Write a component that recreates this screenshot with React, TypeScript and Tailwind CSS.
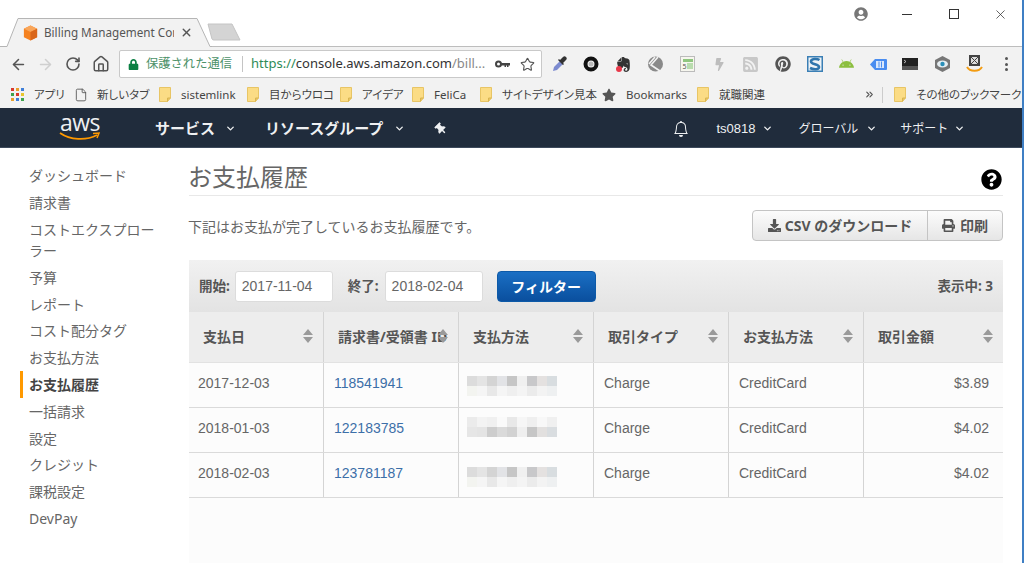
import { ArrowLeft, ArrowRight, ChevronDown, ChevronsRight, File, Home, RotateCw, Star, X } from "lucide-react";
import { FaAndroid, FaBolt, FaDownload, FaLock, FaPinterest, FaPrint, FaQuestionCircle, FaRssSquare, FaStar, FaThumbtack, FaUserCircle } from "react-icons/fa";
import { SiEvernote } from "react-icons/si";
import { BsBell } from "react-icons/bs";

const UI = "font-['Noto_Sans','Noto_Sans_CJK_JP',sans-serif]";
const BODY = "font-['Liberation_Sans','Noto_Sans_CJK_JP',sans-serif]";

function Folder() {
  return (
    <svg width="12" height="15" viewBox="0 0 12 15" className="shrink-0">
      <path d="M.5.5h11v10.5l-3 3.5H.5z" fill="#fbdc85" stroke="#e8c565" />
      <path d="M11.5 11h-3v3.5" fill="#e8c565" stroke="#d9b550" />
    </svg>
  );
}

function AppsIcon() {
  const colors = ["bg-[#d9392c]", "bg-[#e8a02c]", "bg-[#3e7fd9]", "bg-[#3fa34d]", "bg-[#d9392c]", "bg-[#e8c62c]", "bg-[#e8a02c]", "bg-[#3e7fd9]", "bg-[#3fa34d]"];
  return (
    <div className="grid grid-cols-3 gap-[1.5px] w-[13px] h-[13px] shrink-0">
      {colors.map((c, i) => (
        <span key={i} className={c} />
      ))}
    </div>
  );
}

function Bookmark({ icon, label, width }: { icon: React.ReactNode; label: string; width: string }) {
  return (
    <div className={`flex items-center gap-[10px] shrink-0 ${width}`}>
      {icon}
      <span className="whitespace-nowrap">{label}</span>
    </div>
  );
}

function TabStrip() {
  return (
    <div className="relative h-[47px] bg-white border-b border-[#bdbdbd] flex items-end">
      <div className="relative w-[212px] h-[29px] -mb-px flex items-center pl-[22px]">
        <svg width="212" height="29" viewBox="0 0 212 29" className="absolute inset-0">
          <path d="M0 29V28.500h7L18 .5h179l13 28h2v.5z" fill="#f2f2f2" />
          <path d="M0 28.500h7L18 .5h179l13 28h2" fill="none" stroke="#b5b5b5" />
        </svg>
        <svg width="17" height="18" viewBox="0 0 18 18" className="relative shrink-0">
          <path d="M9 1l7 3.500v9L9 17l-7-3.500v-9z" fill="#f58220" />
          <path d="M9 1l7 3.500L9 8 2 4.500z" fill="#f9a65a" />
          <path d="M9 8l7-3.500v9L9 17z" fill="#d9661a" />
        </svg>
        <span className={`relative ml-[5px] w-[130px] overflow-hidden whitespace-nowrap text-[11.700px] text-[#555] ${UI}`}>Billing Management Con</span>
        <X size={13} strokeWidth={2.5} className="relative ml-[6px] text-[#555]" />
      </div>
      <svg width="36" height="19" viewBox="0 0 36 19" className="mb-[4px] -ml-[5px]">
        <path d="M1 1h24l8 16H7a2 2 0 0 1-2-1z" fill="#d4d4d4" stroke="#c4c4c4" />
      </svg>
      <div className="absolute right-[2px] top-0 h-[28px] flex items-center text-[#555]">
        <FaUserCircle size={14} className="mr-[34px] text-[#777]" />
        <span className="w-[10px] h-px bg-[#333] mr-[37px]" />
        <span className="w-[10px] h-[10px] border border-[#333] mr-[34px]" />
        <X size={15} strokeWidth={1.2} className="mr-[12px] text-[#333]" />
      </div>
    </div>
  );
}

function ExtSlot({ children }: { children: React.ReactNode }) {
  return <div className="w-[31.900px] shrink-0 flex items-center justify-center">{children}</div>;
}

function Toolbar() {
  return (
    <div className={`h-[34px] bg-[#f2f2f2] flex items-center pl-[10px] ${UI}`}>
      <ArrowLeft size={17} strokeWidth={2.2} className="text-[#555]" />
      <ArrowRight size={17} strokeWidth={2.2} className="ml-[10px] text-[#cfcfcf]" />
      <RotateCw size={16} strokeWidth={2.4} className="ml-[11px] text-[#555]" />
      <Home size={18} strokeWidth={2} className="ml-[11px] text-[#555]" />
      <div className="ml-[9px] w-[423px] h-[28px] bg-white border border-[#c9c9c9] rounded-[2px] flex items-center pl-[8px] pr-[6px]">
        <FaLock size={11} className="shrink-0 text-[#0b8043]" />
        <span className="ml-[7px] whitespace-nowrap text-[#4c9168] text-[12.300px]">保護された通信</span>
        <span className="ml-[10px] w-px h-[16px] bg-[#c4c4c4] shrink-0" />
        <span className="ml-[8px] whitespace-nowrap text-[13px]">
          <span className="text-[#2e8b57]">https://</span>
          <span className="text-[#333]">console.aws.amazon.com</span>
          <span className="text-[#888]">/bill...</span>
        </span>
        <svg width="15" height="8" viewBox="0 0 15 8" className="ml-auto shrink-0">
          <circle cx="3.500" cy="4" r="2.500" fill="none" stroke="#444" strokeWidth="2" />
          <path d="M6 3h9v2.500h-1.500V7H12V5.500h-1V7H9.500V5.500H6z" fill="#444" />
        </svg>
        <Star size={15} strokeWidth={1.8} className="ml-[10px] shrink-0 text-[#555]" />
      </div>
      <div className="ml-[2px] flex items-center">
        <ExtSlot>
          <svg width="16" height="16" viewBox="0 0 16 16">
            <path d="M1 15l1-4 6-6 3 3-6 6z" fill="#7d8bd0" />
            <path d="M8 4l3-3c1-1 2-1 3 0s1 2 0 3l-3 3 1 1-1 1-5-5 1-1z" fill="#333" />
          </svg>
        </ExtSlot>
        <ExtSlot>
          <svg width="16" height="16" viewBox="0 0 16 16">
            <circle cx="8" cy="8" r="5.500" fill="none" stroke="#111" strokeWidth="4" />
            <circle cx="8" cy="8" r="2.500" fill="#bbb" />
          </svg>
        </ExtSlot>
        <ExtSlot>
          <div className="relative">
            <SiEvernote size={15} className="text-[#333]" />
            <span className="absolute left-0 bottom-0 w-[6px] h-[6px] rounded-full bg-[#e8394a]" />
          </div>
        </ExtSlot>
        <ExtSlot>
          <svg width="17" height="16" viewBox="0 0 17 16">
            <circle cx="8.500" cy="8" r="7.500" fill="#8a8a8a" />
            <path d="M11 1L4 9l9 6M8 1L2 8" fill="none" stroke="#f2f2f2" strokeWidth="1.600" />
          </svg>
        </ExtSlot>
        <ExtSlot>
          <svg width="15" height="16" viewBox="0 0 15 16">
            <rect x=".5" y=".5" width="14" height="15" fill="#f6f6ee" stroke="#bbb" />
            <rect x="3" y="3" width="10" height="3" fill="#8fc57f" />
            <rect x="7" y="7" width="6" height="6" fill="#b9dcae" />
            <text x="2.500" y="13" fontSize="7" fill="#555">5</text>
          </svg>
        </ExtSlot>
        <ExtSlot>
          <FaBolt size={13} className="text-[#bdbdbd]" />
        </ExtSlot>
        <ExtSlot>
          <FaRssSquare size={17} className="text-[#c8c8c8]" />
        </ExtSlot>
        <ExtSlot>
          <FaPinterest size={16} className="text-[#555]" />
        </ExtSlot>
        <ExtSlot>
          <svg width="16" height="16" viewBox="0 0 16 16">
            <rect width="16" height="16" fill="#3b7fb5" />
            <rect x="1.500" y="1.500" width="13" height="13" fill="#eef3f7" />
            <path d="M12.500 4C10 2.500 4 2.500 4 5.500S12 8 12 11s-6 2.500-9 1" fill="none" stroke="#2f75ad" strokeWidth="2.600" />
          </svg>
        </ExtSlot>
        <ExtSlot>
          <FaAndroid size={15} className="text-[#8cbf3f]" />
        </ExtSlot>
        <ExtSlot>
          <svg width="17" height="13" viewBox="0 0 17 13">
            <path d="M5 1h11a1 1 0 0 1 1 1v9a1 1 0 0 1-1 1H5L0 6.500z" fill="#4a8df0" />
            <rect x="6" y="3" width="8" height="7" fill="#dbe8fb" />
            <path d="M9 3.500v6M11.500 3.500v6" stroke="#4a8df0" />
          </svg>
        </ExtSlot>
        <ExtSlot>
          <svg width="16" height="12" viewBox="0 0 16 12">
            <rect width="16" height="12" fill="#222" />
            <rect y="8" width="16" height="4" fill="#555" />
            <path d="M2 2l2 1.500L2 5" fill="none" stroke="#ddd" strokeWidth=".8" />
          </svg>
        </ExtSlot>
        <ExtSlot>
          <svg width="17" height="16" viewBox="0 0 17 16">
            <path d="M8.500 0l7.500 4v8l-7.500 4L1 12V4z" fill="#777" />
            <ellipse cx="8.500" cy="8" rx="5.500" ry="3.500" fill="#e6eef2" />
            <circle cx="8.500" cy="8" r="2.200" fill="#2a8fb8" />
          </svg>
        </ExtSlot>
        <ExtSlot>
          <svg width="17" height="18" viewBox="0 0 17 18">
            <rect x="3" y="0" width="11" height="11" fill="#444" />
            <rect x="5" y="2" width="7" height="7" fill="#ddd" />
            <path d="M5 2l7 7M12 2L5 9" stroke="#444" />
            <path d="M1 12c3 5 12 5 15 0" fill="none" stroke="#f39c12" strokeWidth="2" />
          </svg>
        </ExtSlot>
        <ExtSlot>
          <div className="flex flex-col gap-[2.500px]">
            <span className="w-[3px] h-[3px] rounded-full bg-[#555]" />
            <span className="w-[3px] h-[3px] rounded-full bg-[#555]" />
            <span className="w-[3px] h-[3px] rounded-full bg-[#555]" />
          </div>
        </ExtSlot>
      </div>
    </div>
  );
}

function BookmarksBar() {
  return (
    <div className={`h-[27px] bg-[#f2f2f2] flex items-center pl-[11px] text-[11.500px] text-[#444] [font-feature-settings:'palt'] ${UI}`}>
      <Bookmark icon={<AppsIcon />} label="アプリ" width="w-[64px]" />
      <Bookmark icon={<File size={14} strokeWidth={1.5} className="text-[#555] -mx-[1px]" />} label="新しいタブ" width="w-[84px]" />
      <Bookmark icon={<Folder />} label="sistemlink" width="w-[88px]" />
      <Bookmark icon={<Folder />} label="目からウロコ" width="w-[93px]" />
      <Bookmark icon={<Folder />} label="アイデア" width="w-[72px]" />
      <Bookmark icon={<Folder />} label="FeliCa" width="w-[68px]" />
      <Bookmark icon={<Folder />} label="サイトデザイン見本" width="w-[122px]" />
      <Bookmark icon={<FaStar size={14} className="text-[#555]" />} label="Bookmarks" width="w-[95px]" />
      <Bookmark icon={<Folder />} label="就職関連" width="w-[167px]" />
      <ChevronsRight size={11} strokeWidth={2.5} className="text-[#555] shrink-0" />
      <span className="ml-[7px] w-px h-[16px] bg-[#ccc] shrink-0" />
      <div className="ml-[11px]">
        <Bookmark icon={<Folder />} label="その他のブックマーク" width="w-[115px]" />
      </div>
    </div>
  );
}

function NavMenu({ label, className }: { label: string; className: string }) {
  return (
    <div className={`flex items-center whitespace-nowrap ${className}`}>
      <span>{label}</span>
    </div>
  );
}

function Caret({ className }: { className: string }) {
  return <ChevronDown size={11} strokeWidth={3} className={`shrink-0 ${className}`} />;
}

function AwsNav() {
  return (
    <div className={`h-[40px] pt-[2px] bg-[#202c3c] border-b border-[#3d4a5c] flex items-center text-[#eef0f2] ${UI}`}>
      <div className="ml-[59px] w-[42px] h-[34px] relative flex flex-col items-center shrink-0">
        <span className="text-[23px] leading-[24px] -mt-[2px] tracking-[-0.5px] font-['Open_Sans',sans-serif]">aws</span>
        <svg width="42" height="9" viewBox="0 0 42 9" className="absolute left-0 bottom-[5px]">
          <path d="M1 1c10 7 26 8 37 2" fill="none" stroke="#f90" strokeWidth="1.800" />
          <path d="M34 1.500l6-.5-2 5" fill="none" stroke="#f90" strokeWidth="1.500" />
        </svg>
      </div>
      <NavMenu label="サービス" className="ml-[54px] text-[15px] font-bold" />
      <Caret className="ml-[10px]" />
      <NavMenu label="リソースグループ" className="ml-[29px] text-[15px] font-bold" />
      <Caret className="ml-[11px]" />
      <FaThumbtack size={12} className="ml-[30px] -rotate-45 shrink-0" />
      <BsBell size={16} className="ml-[226px] shrink-0" />
      <NavMenu label="ts0818" className={`ml-[27px] text-[13px] ${BODY}`} />
      <Caret className="ml-[7px]" />
      <NavMenu label="グローバル" className="ml-[25px] text-[12px]" />
      <Caret className="ml-[8px]" />
      <NavMenu label="サポート" className="ml-[23px] text-[12px]" />
      <Caret className="ml-[6px]" />
    </div>
  );
}

function Sidebar() {
  const items = ["ダッシュボード", "請求書", "コストエクスプローラー", "予算", "レポート", "コスト配分タグ", "お支払方法", "お支払履歴", "一括請求", "設定", "クレジット", "課税設定", "DevPay"];
  return (
    <div className="w-[189px] shrink-0 pt-[14.600px] pl-[20px]">
      {items.map((item) => (
        <div
          key={item}
          className={
            item === "お支払履歴"
              ? "w-[139px] py-[2.900px] pl-[6px] border-l-[3px] border-[#f90] text-[14px] leading-[21px] font-bold text-[#444]"
              : "w-[139px] py-[2.900px] pl-[9px] text-[14px] leading-[21px] text-[#666]"
          }
        >
          {item}
        </div>
      ))}
    </div>
  );
}

const rowsTiles = [
  ["bg-[#dcdcdc]", "bg-[#e4e4e4]", "bg-[#d4d4d4]", "bg-[#e2e3e6]", "bg-[#c6c6c6]", "bg-[#f0f0f0]", "bg-[#c8c8ca]", "bg-[#e4e1e0]", "bg-[#d8dde0]"],
  ["bg-[#f3f4f0]", "bg-[#f5f5f5]", "bg-[#e8e8e8]", "bg-[#f5f5f5]", "bg-[#efefef]", "bg-[#f4f4f4]", "bg-[#ebebeb]", "bg-[#f3f3f3]", "bg-[#eef0f1]"],
];

const rowsTilesFlipped = [
  ["bg-[#ebebeb]", "bg-[#f3f3f3]", "bg-[#f0f0f0]", "bg-[#fafafa]", "bg-[#e8e8e8]", "bg-[#f6f6f6]", "bg-[#efefef]", "bg-[#f8f8f8]", "bg-[#f0f0f0]"],
  ["bg-[#e6e6e6]", "bg-[#e4e4e4]", "bg-[#cdcdcd]", "bg-[#dadada]", "bg-[#d2d2d2]", "bg-[#efefef]", "bg-[#c6c6c6]", "bg-[#e2e0df]", "bg-[#d9dde0]"],
];

function Mosaic({ rows, offset }: { rows: string[][]; offset: string }) {
  return (
    <div className={`flex flex-col ${offset}`}>
      {rows.map((row, i) => (
        <div key={i} className="flex">
          {row.map((c, j) => (
            <span key={j} className={`w-[10px] h-[10px] ${c}`} />
          ))}
        </div>
      ))}
    </div>
  );
}

function SortIcon() {
  return (
    <svg width="10" height="14" viewBox="0 0 10 14" className="ml-auto shrink-0 text-[#9a9a9a]">
      <path d="M5 0l5 6H0zM0 8h10l-5 6z" fill="currentColor" />
    </svg>
  );
}

const headers = ["支払日", "請求書/受領書 ID", "支払方法", "取引タイプ", "お支払方法", "取引金額"];

const payments = [
  { date: "2017-12-03", id: "118541941", tiles: rowsTiles, offset: "mt-[5px]", type: "Charge", method: "CreditCard", amount: "$3.89" },
  { date: "2018-01-03", id: "122183785", tiles: rowsTilesFlipped, offset: "-mt-[4px]", type: "Charge", method: "CreditCard", amount: "$4.02" },
  { date: "2018-02-03", id: "123781187", tiles: rowsTiles, offset: "mt-[6px]", type: "Charge", method: "CreditCard", amount: "$4.02" },
];

const gridCols = "grid grid-cols-[135px_135px_135px_135px_135px_139px]";

function PaymentsTable() {
  return (
    <div className="flex-1 bg-[#fcfcfc]">
      <div className={`${gridCols} h-[51px] bg-[#ededed] border-b border-[#e2e2e2]`}>
        {headers.map((h, i) => (
          <div key={h} className={`flex items-center pb-[2px] pl-[14px] pr-[10px] ${i < 5 ? "border-r border-[#d4d4d4]" : ""}`}>
            <span className="min-w-0 whitespace-nowrap text-[14px] font-bold text-[#555]">{h}</span>
            <SortIcon />
          </div>
        ))}
      </div>
      {payments.map((p) => (
        <div key={p.id} className={`${gridCols} h-[45px] border-b border-[#dadada] text-[14px] text-[#666] ${BODY}`}>
          <div className="flex items-center pb-[3px] pl-[9px] border-r border-[#d4d4d4]">{p.date}</div>
          <div className="flex items-center pb-[3px] pl-[10px] border-r border-[#d4d4d4] text-[#3c6fa8]">{p.id}</div>
          <div className="flex items-center pb-[3px] pl-[8px] border-r border-[#d4d4d4]">
            <Mosaic rows={p.tiles} offset={p.offset} />
          </div>
          <div className="flex items-center pb-[3px] pl-[10px] border-r border-[#d4d4d4]">{p.type}</div>
          <div className="flex items-center pb-[3px] pl-[10px] border-r border-[#d4d4d4]">{p.method}</div>
          <div className="flex items-center pb-[3px] justify-end pr-[14px]">{p.amount}</div>
        </div>
      ))}
    </div>
  );
}

function DateField({ value }: { value: string }) {
  return (
    <div className={`w-[98px] h-[31px] bg-white border border-[#dcdcdc] rounded-[3px] flex items-center pl-[6px] text-[14px] font-normal text-[#666] ${BODY}`}>{value}</div>
  );
}

function Content() {
  return (
    <div className="flex-1 min-w-0 pr-[19px] flex flex-col">
      <div className="h-[48px] border-b border-[#e8e8e8] flex items-end justify-between pb-[1px]">
        <h1 className="-ml-[1px] text-[24px] leading-[34px] text-[#666]">お支払履歴</h1>
        <FaQuestionCircle size={21} className="text-black mb-[4px] mr-[1px]" />
      </div>
      <div className="h-[64px] flex items-center justify-between">
        <p className="-ml-[1px] mb-[4px] text-[14px] text-[#666]">下記はお支払が完了しているお支払履歴です。</p>
        <div className="flex h-[31px] mb-[6px] rounded-[4px] border border-[#c4c4c4] bg-gradient-to-b from-[#fcfcfc] to-[#e6e6e6] text-[14px] font-bold text-[#555]">
          <div className="w-[175px] flex items-center justify-center gap-[4px] border-r border-[#c4c4c4]">
            <FaDownload size={13} />
            <span>CSV のダウンロード</span>
          </div>
          <div className="w-[74px] flex items-center justify-center gap-[5px]">
            <FaPrint size={13} />
            <span>印刷</span>
          </div>
        </div>
      </div>
      <div className="h-[52px] bg-gradient-to-b from-[#f1f1f1] to-[#e3e3e3] flex items-center pl-[10px] pr-[10px] text-[13.500px] font-bold text-[#555]">
        <span>開始:</span>
        <div className="ml-[5px]">
          <DateField value="2017-11-04" />
        </div>
        <span className="ml-[15px]">終了:</span>
        <div className="ml-[6px]">
          <DateField value="2018-02-04" />
        </div>
        <div className="ml-[14px] w-[99px] h-[31px] rounded-[4px] bg-gradient-to-b from-[#1a6fc4] to-[#0a4f9e] border border-[#0d5aa8] flex items-center justify-center text-[14px] text-white">フィルター</div>
        <span className="ml-auto">表示中: 3</span>
      </div>
      <PaymentsTable />
    </div>
  );
}

export default function App() {
  return (
    <div className={`w-[1024px] h-[563px] overflow-hidden flex flex-col bg-white border-r-2 border-[#3f7fc4] ${UI}`}>
      <TabStrip />
      <Toolbar />
      <BookmarksBar />
      <AwsNav />
      <div className="flex-1 min-h-0 flex">
        <Sidebar />
        <Content />
      </div>
    </div>
  );
}
